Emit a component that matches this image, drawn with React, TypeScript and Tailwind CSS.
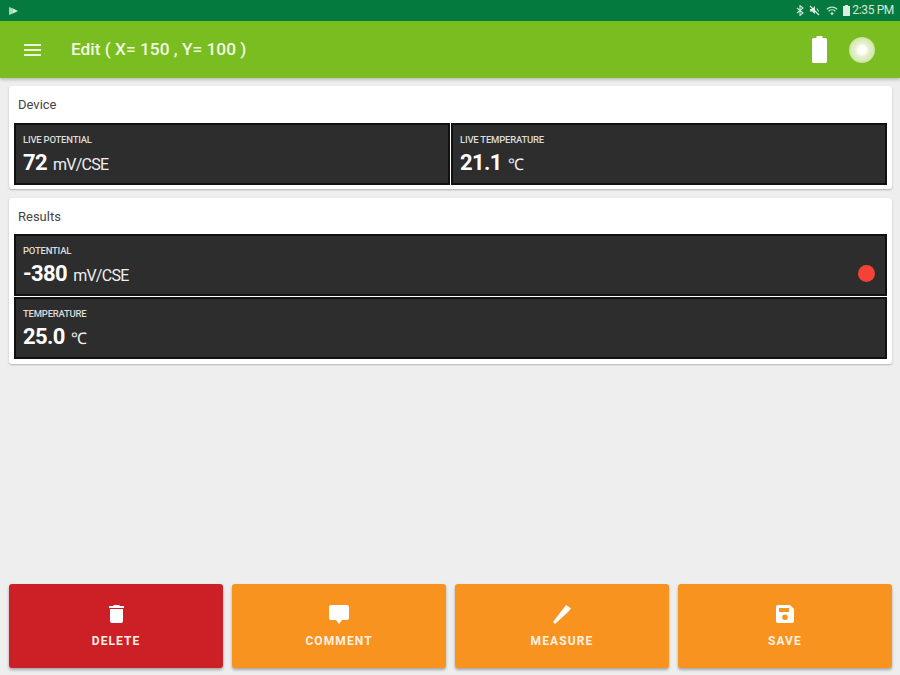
const roboto = { fontFamily: "Roboto, 'Liberation Sans', sans-serif" };

const Reading = ({ label, value, unit, dot }: { label: string; value: string; unit: string; dot?: boolean }) => {
	return (
		<div className="flex-1 h-full bg-[#2d2d2d] border-2 border-[#111111] flex items-center justify-between pl-[7px] pr-[10px]">
			<div className="flex flex-col text-white pt-[3px]">
				<span className="text-[9.5px] leading-[12px] font-medium tracking-[-0.22px] text-[#dcdcdc] mb-[4px]">{label}</span>
				<span className="flex items-baseline gap-[6px] leading-[26px]">
					<span className="text-[22px] font-bold tracking-[-0.6px]">{value}</span>
					<span className="text-[16px] tracking-[-0.75px] text-[#f0f0f0]">{unit}</span>
				</span>
			</div>
			{dot && <div className="w-[17px] h-[17px] mt-[17px] rounded-full bg-[#f44336]"></div>}
		</div>
	);
};

const ActionButton = ({ label, color, children }: { label: string; color: string; children: React.ReactNode }) => {
	return (
		<button className={`flex-1 h-[84px] rounded-[3px] flex flex-col items-center justify-start pt-[18px] text-white shadow-[0_2px_3px_rgba(0,0,0,0.3)] ${color}`}>
			<div className="h-[24px] flex items-center justify-center">{children}</div>
			<span className="mt-[7px] text-[12px] leading-[16px] font-bold tracking-[1.1px] text-[#fff1e4]">{label}</span>
		</button>
	);
};

const App = () => {
	return (
		<div className="w-[900px] h-[675px] bg-[#eeeeee] flex flex-col overflow-hidden" style={roboto}>
			{/* status bar */}
			<div className="h-[21px] bg-[#047a3e] flex items-center justify-between pl-[8px] pr-[6px] shrink-0">
				<svg width="11" height="10" viewBox="0 0 11 10" fill="none">
					<path d="M1 1v8l4-1.5V2.5z" fill="#a9d6b8" />
					<path d="M5 2.5v5L10 5z" fill="#d3ead9" />
				</svg>
				<div className="flex items-center gap-[5px] text-[#cfe6d6]">
					<svg width="8" height="11" viewBox="0 0 8 11" fill="none" stroke="#cfe6d6" strokeWidth="1.1">
						<path d="M1 3l6 5-3 2.4V.6L7 3 1 8" />
					</svg>
					<svg width="12" height="11" viewBox="0 0 12 11" fill="#dcefe2">
						<path d="M1 4h2l3-3v8L3 6.5H1z" />
						<path d="M1 1l9 9" stroke="#dcefe2" strokeWidth="1.2" />
						<path d="M8 3.5l1.5 3" stroke="#dcefe2" strokeWidth="1" />
					</svg>
					<svg width="12" height="10" viewBox="0 0 12 10" fill="none" stroke="#c5e1ce" strokeWidth="1.2">
						<path d="M.8 3.2a7.5 7.5 0 0 1 10.4 0" />
						<path d="M2.6 5.2a5 5 0 0 1 6.8 0" />
						<path d="M6 9.5L4.2 7.2a2.6 2.6 0 0 1 3.6 0z" fill="#c5e1ce" stroke="none" />
					</svg>
					<svg width="7" height="11" viewBox="0 0 7 11" fill="#dcefe2">
						<path d="M2 0h3v1h2v10H0V1h2z" />
					</svg>
					<span className="text-[12px] leading-[21px] tracking-[-0.35px] text-[#d5e9dc] -ml-[3px]">2:35 PM</span>
				</div>
			</div>

			{/* toolbar */}
			<div className="h-[57px] bg-[#7abd20] flex items-center pl-[24px] pr-[25px] shrink-0 shadow-[0_2px_3px_rgba(0,0,0,0.2)]">
				<div className="w-[17px] flex flex-col gap-[3px]">
					<div className="h-[2px] bg-[#eaf5d6]"></div>
					<div className="h-[2px] bg-[#eaf5d6]"></div>
					<div className="h-[2px] bg-[#eaf5d6]"></div>
				</div>
				<h1 className="ml-[30px] text-[17.300px] font-medium text-[#f1f9e2]">Edit ( X= 150 , Y= 100 )</h1>
				<div className="ml-auto flex items-center gap-[22px]">
					<svg width="15" height="27" viewBox="0 0 15 27" fill="#ffffff">
						<path d="M4.5 0h6v2h3a1.5 1.5 0 0 1 1.5 1.5V25.5a1.5 1.5 0 0 1-1.5 1.5h-12A1.5 1.5 0 0 1 0 25.5V3.500A1.500 1.500 0 0 1 1.500 2h3z" />
					</svg>
					<div className="w-[26px] h-[26px] rounded-full bg-[radial-gradient(circle,#ffffff_0%,#ffffff_22%,#e4f1cb_38%,#d6e9b4_62%,#a9d468_85%,#7abd20_100%)]"></div>
				</div>
			</div>

			{/* cards */}
			<div className="flex-1 flex flex-col gap-[9px] pl-[9px] pr-[8px] pt-[8px]">
				<section className="bg-white rounded-[3px] shadow-[0_1px_2px_rgba(0,0,0,0.25)] px-[5px] pb-[4px]">
					<h2 className="h-[37px] pl-[4px] flex items-center text-[13px] text-[#444444]">Device</h2>
					<div className="h-[62px] flex gap-[1px]">
						<Reading label="LIVE POTENTIAL" value="72" unit="mV/CSE" />
						<Reading label="LIVE TEMPERATURE" value="21.1" unit="℃" />
					</div>
				</section>
				<section className="bg-white rounded-[3px] shadow-[0_1px_2px_rgba(0,0,0,0.25)] px-[5px] pb-[5px]">
					<h2 className="h-[36px] pl-[4px] pt-[1px] flex items-center text-[13px] text-[#444444]">Results</h2>
					<div className="flex flex-col gap-[1px]">
						<div className="h-[62px] flex"><Reading label="POTENTIAL" value="-380" unit="mV/CSE" dot /></div>
						<div className="h-[62px] flex"><Reading label="TEMPERATURE" value="25.0" unit="℃" /></div>
					</div>
				</section>
			</div>

			{/* actions */}
			<div className="flex gap-[8.670px] pl-[9px] pr-[8px] pb-[7px] shrink-0">
				<ActionButton label="DELETE" color="bg-[#cd1f26]">
					<svg width="15" height="18" viewBox="0 0 15 18" fill="#ffffff">
						<path d="M5 0h5l1 1h4v2H0V1h4zM1 4h13v12a2 2 0 0 1-2 2H3a2 2 0 0 1-2-2z" />
					</svg>
				</ActionButton>
				<ActionButton label="COMMENT" color="bg-[#f8931f]">
					<svg width="20" height="19" viewBox="0 0 20 19" fill="#ffffff">
						<path d="M2 0h16a2 2 0 0 1 2 2v11a2 2 0 0 1-2 2h-5l-3 4-3-4H2a2 2 0 0 1-2-2V2a2 2 0 0 1 2-2z" />
					</svg>
				</ActionButton>
				<ActionButton label="MEASURE" color="bg-[#f8931f]">
					<svg width="18" height="19" viewBox="0 0 18 19" fill="#ffffff">
						<path d="M13 0l5 3.500-3 3.500L2 19l-2-2z" />
					</svg>
				</ActionButton>
				<ActionButton label="SAVE" color="bg-[#f8931f]">
					<svg width="18" height="18" viewBox="0 0 18 18" fill="#ffffff">
						<path fillRule="evenodd" d="M2 0h12l4 4v12a2 2 0 0 1-2 2H2a2 2 0 0 1-2-2V2a2 2 0 0 1 2-2zM3 3v4h10V3zM9 9.500a2.800 2.800 0 1 0 0 5.600 2.800 2.800 0 0 0 0-5.600z" />
					</svg>
				</ActionButton>
			</div>
		</div>
	);
};

export default App;
